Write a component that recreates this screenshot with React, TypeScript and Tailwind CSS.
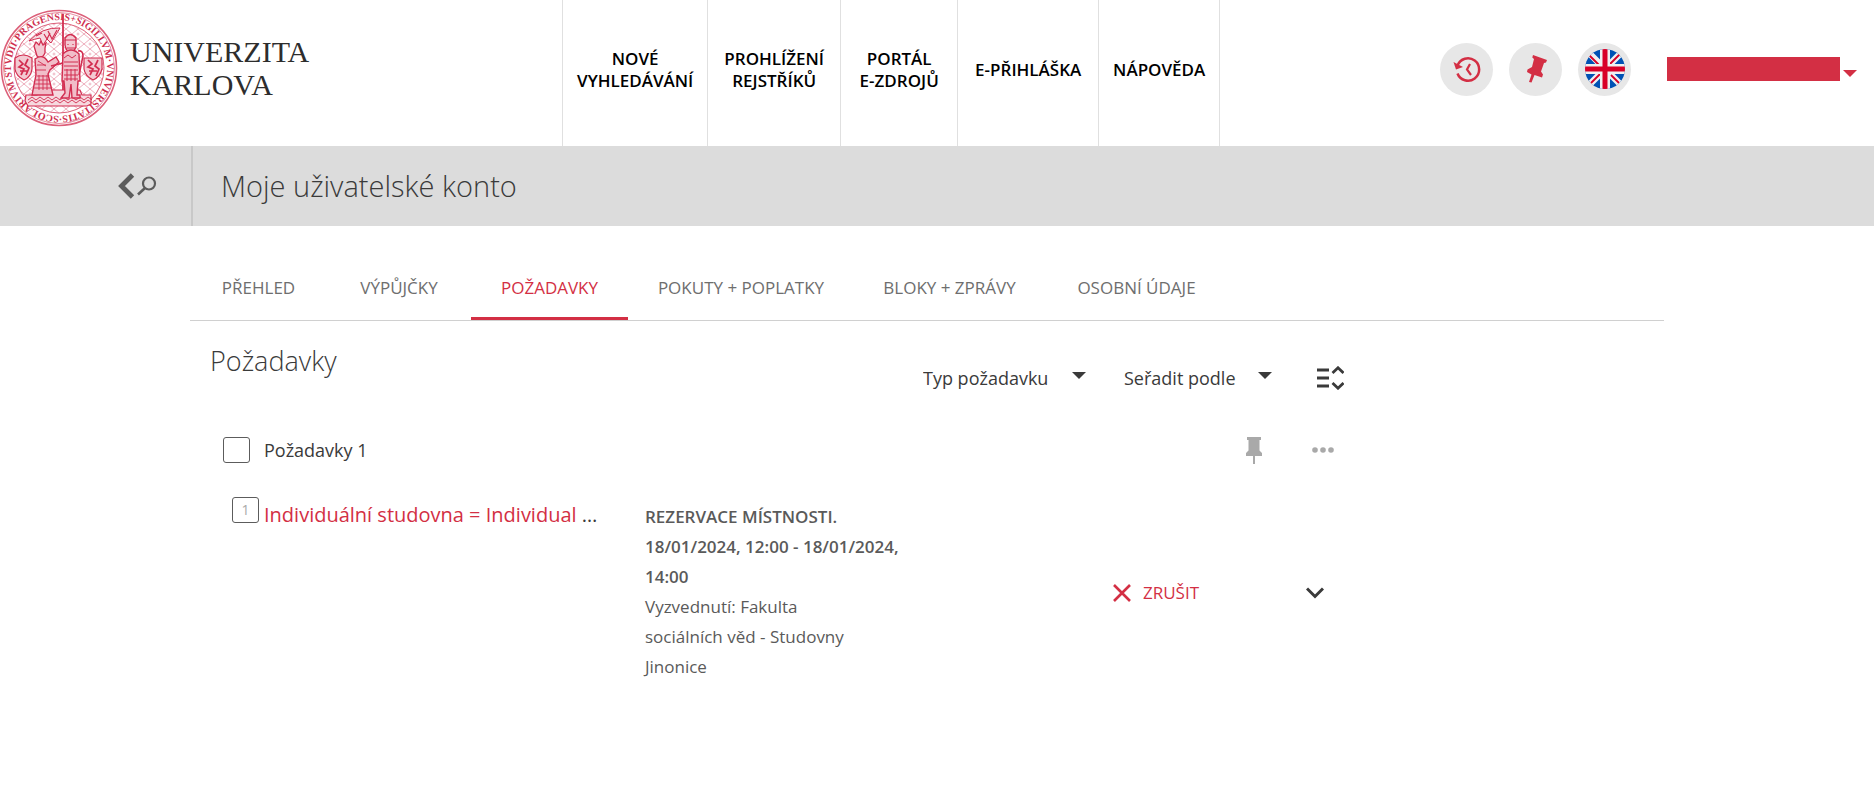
import type { ReactNode } from 'react';

const navItems = [
  { lines: ['NOVÉ', 'VYHLEDÁVÁNÍ'], width: 'w-[145px]' },
  { lines: ['PROHLÍŽENÍ', 'REJSTŘÍKŮ'], width: 'w-[133px]' },
  { lines: ['PORTÁL', 'E-ZDROJŮ'], width: 'w-[117px]' },
  { lines: ['E-PŘIHLÁŠKA'], width: 'w-[141px]' },
  { lines: ['NÁPOVĚDA'], width: 'w-[121px]' },
];

const tabs = [
  { label: 'PŘEHLED', width: 'w-[137px]' },
  { label: 'VÝPŮJČKY', width: 'w-36' },
  { label: 'POŽADAVKY', width: 'w-[157px]' },
  { label: 'POKUTY + POPLATKY', width: 'w-[226px]' },
  { label: 'BLOKY + ZPRÁVY', width: 'w-[191px]' },
  { label: 'OSOBNÍ ÚDAJE', width: 'w-[183px]' },
];

function Seal() {
  return (
    <svg viewBox="0 0 118 118" className="size-[118px] shrink-0" fill="none" stroke="#d22d50" aria-hidden="true">
      <defs>
        <pattern id="lattice" width="12" height="10" patternUnits="userSpaceOnUse">
          <path d="M0 5L6 0L12 5L6 10Z" stroke="#e58da0" strokeWidth="0.7" />
          <circle cx="6" cy="5" r="1" stroke="#e58da0" strokeWidth="0.6" />
        </pattern>
        <path id="ring" d="M59 107A48 48 0 1 1 59.1 107" />
      </defs>
      <circle cx="59" cy="59" r="57.5" strokeWidth="1.6" stroke="#dc5f79" />
      <circle cx="59" cy="59" r="55.5" strokeWidth="0.7" stroke="#dc5f79" />
      <circle cx="59" cy="59" r="45" fill="url(#lattice)" strokeWidth="1" stroke="#dc5f79" />
      <text fill="#cf2f50" stroke="none" fontSize="10" fontWeight="700" fontFamily="Liberation Serif, serif">
        <textPath href="#ring">SCOLARIVM·STVDII·PRAGENSIS+SIGILLVM·VNIVERSITATIS·</textPath>
      </text>
      <path d="M63 5V86" strokeWidth="1.8" />
      <path d="M26 86H37L39 81H80L82 86H91V95L87 97H28L25 92Z" fill="#f6d9df" strokeWidth="1.2" />
      <path d="M28 91l4-3 4 3 4-3 4 3 4-3 4 3 4-3 4 3 4-3 4 3 4-3 4 3 4-3 4 3 4-3 4 3M28 94l4-3 4 3 4-3 4 3 4-3 4 3 4-3 4 3 4-3 4 3 4-3 4 3 4-3 4 3 4-3 4 3" strokeWidth="0.9" />
      <path d="M15 49Q23 43 32 49V60Q31 68 24 71Q16 67 15 60Z" fill="#f3c9d2" strokeWidth="1.2" />
      <path d="M19 51l4 4-4 3 5 2-3 6M28 50l-3 6 4 3-3 7M20 62h8" strokeWidth="1.7" />
      <path d="M84 49H102V60Q100 68 93 71Q85 67 84 60Z" fill="#f3c9d2" strokeWidth="1.2" />
      <path d="M88 51l4 4-4 3 5 2-3 6M98 51l-3 6 4 3-3 7M89 62h8" strokeWidth="1.7" />
      <path d="M34 37l2-4 3 3 2-4 2 4 3-2-1 5v5q-3 7-8 3z" fill="#f3c9d2" strokeWidth="1.3" />
      <path d="M35 50Q43 44 48 53L56 48 59 53 50 61 48 65 53 86H32L36 66Z" fill="#f1bdc8" strokeWidth="1.4" />
      <path d="M37 56h9M36 61h10M37 67h12M36 71h14M35 75h15M34 79h17M39 66v15M43 66v15M47 66v15M38 52l8 5" strokeWidth="0.9" />
      <path d="M65 29Q70 22 76 29V38Q74 43 70 43Q66 42 65 36Z" fill="#f3c9d2" strokeWidth="1.4" />
      <path d="M65 31h11M68 35v1M73 35v1M67 39h8" strokeWidth="1.2" />
      <path d="M63 45Q71 37 79 45L80 72H78L77 86H80V89H72L71 75 69 89H61L65 84 64 72H62Z" fill="#f1bdc8" strokeWidth="1.4" />
      <path d="M64 49l4-3 4 3 4-3M64 53h14M64 57h14M64 61h14M64 66h14M64 70h14M67 60v12M71 60v12M75 60v12" strokeWidth="1" />
      <path d="M78 42q5-1 5 5l-4 19M51 57l12-3" strokeWidth="1.6" />
      <path d="M29 32Q42 18 60 19Q54 29 51 34L47 30 43 36 40 29Q35 30 29 32Z" fill="#f6d9df" strokeWidth="1" />
      <path d="M44 25l3 5 3-6M48 22l4 8 5-9M36 27l6-3" strokeWidth="1.2" />
    </svg>
  );
}

function HistoryIcon() {
  return (
    <svg viewBox="0 0 28 28" className="size-7" fill="none" stroke="#d32f44" strokeWidth="2.5" aria-hidden="true">
      <path d="M4.500 10.500A11.200 11.200 0 1 1 4.500 18.500" />
      <path d="M0.500 7L3 14.500L10 12Z" fill="#d32f44" stroke="none" />
      <path d="M17 9L14 14.500L18 20" strokeWidth="2.200" />
    </svg>
  );
}

function PinShape({ className }: { className: string }) {
  return (
    <svg viewBox="0 0 16 27" className={className} fill="currentColor" aria-hidden="true">
      <path d="M1 0H15V3H13.500V13.500L16 16V19H9V27H7V19H0V16L2.500 13.500V3H1Z" />
    </svg>
  );
}

function TiltedPin() {
  return (
    <svg viewBox="0 0 28 30" className="h-[30px] w-7" fill="#d32f44" aria-hidden="true">
      <path d="M11 1L25 6L24 8.500L22 9L19 17.500L21 20.500L20 23.500L12.500 21L9.500 28.500L7 28L9.500 20.500L5 18L5.500 15.500L10 13L12 5L10.300 3.500Z" />
    </svg>
  );
}

function UkFlag() {
  return (
    <svg viewBox="0 0 40 40" className="size-10" aria-hidden="true">
      <defs>
        <clipPath id="disc">
          <circle cx="20" cy="20" r="20" />
        </clipPath>
      </defs>
      <g clipPath="url(#disc)">
        <rect width="40" height="40" fill="#0052b4" />
        <path d="M3 3L37 37M37 3L3 37" stroke="#f0f0f0" strokeWidth="6.500" />
        <path d="M4.500 6.500L14 16M26 26L34 34M35 5L25 15M15 25L6 34" stroke="#d80027" strokeWidth="1.800" />
        <path d="M20 0V40M0 20H40" stroke="#f0f0f0" strokeWidth="10" />
        <path d="M20 0V40M0 20H40" stroke="#d80027" strokeWidth="5" />
      </g>
    </svg>
  );
}

function Caret({ className }: { className: string }) {
  return (
    <svg viewBox="0 0 14 7" className={className} fill="currentColor" aria-hidden="true">
      <path d="M0 0H14L7 7Z" />
    </svg>
  );
}

function RoundButton({ label, children }: { label: string; children: ReactNode }) {
  return (
    <button type="button" aria-label={label} className="flex size-[53px] items-center justify-center rounded-full bg-[#e7e7e7]">
      {children}
    </button>
  );
}

function Dropdown({ label, width }: { label: string; width: string }) {
  return (
    <div className={`grid items-center ${width}`}>
      <select aria-label={label} className="col-start-1 row-start-1 h-10 appearance-none bg-transparent text-[18px] leading-10">
        <option>{label}</option>
      </select>
      <Caret className="pointer-events-none col-start-1 row-start-1 mb-1.5 h-[7px] w-3.5 justify-self-end" />
    </div>
  );
}

export default function App() {
  return (
    <div className="min-h-screen bg-white font-['Open_Sans','Noto_Sans',sans-serif] text-[#3a3a3a]">
      <header className="flex h-[146px]">
        <a href="#" className="flex w-[30%] shrink-0 items-start gap-3 pt-[9px]">
          <Seal />
          <span className="pt-[26px] font-['Liberation_Serif',serif] text-[30px] leading-[33px] text-[#2d2d2d]">
            UNIVERZITA
            <br />
            KARLOVA
          </span>
        </a>
        <nav className="flex border-l border-[#e0e0e0]">
          {navItems.map(({ lines, width }) => (
            <a
              key={lines[0]}
              href="#"
              className={`flex flex-col justify-center border-r border-[#e0e0e0] pb-1.5 text-center text-[17px] leading-[22px] font-semibold text-black ${width}`}
            >
              {lines.map((line) => (
                <span key={line}>{line}</span>
              ))}
            </a>
          ))}
        </nav>
        <div className="ml-auto flex items-center gap-4 pr-[17px] pb-2">
          <RoundButton label="Historie hledání">
            <HistoryIcon />
          </RoundButton>
          <RoundButton label="Moje oblíbené">
            <TiltedPin />
          </RoundButton>
          <RoundButton label="English">
            <UkFlag />
          </RoundButton>
          <button type="button" aria-label="Uživatel" className="ml-5 flex items-center gap-[3px] text-[#d32f44]">
            <span className="h-6 w-[173px] bg-[#d32f44]" />
            <Caret className="mt-2 h-[7px] w-3.5" />
          </button>
        </div>
      </header>

      <div className="flex h-20 items-center bg-[#dcdcdc]">
        <div className="flex h-full w-[193px] items-center justify-end border-r-2 border-[#c8c8c8] pr-[34px]">
          <button type="button" aria-label="Zpět na hledání" className="text-[#5c5c5c]">
            <svg viewBox="0 0 39 26" className="h-[26px] w-[39px]" fill="none" stroke="currentColor" aria-hidden="true">
              <path d="M14.500 2L3.500 13L14.500 24" strokeWidth="4.800" />
              <circle cx="31" cy="10.500" r="6" strokeWidth="2.200" />
              <path d="M27 15L20 21.500" strokeWidth="2.600" />
            </svg>
          </button>
        </div>
        <h1 className="pl-7 text-[29px] leading-10 font-light">Moje uživatelské konto</h1>
      </div>

      <main className="pr-[210px] pl-[190px]">
        <div role="tablist" className="mt-[30px] flex border-b border-[#d0d0d0]">
          {tabs.map(({ label, width }) => {
            const active = label === 'POŽADAVKY';
            return (
              <button
                key={label}
                type="button"
                role="tab"
                aria-selected={active}
                className={`h-16 border-b-[3px] pt-0.5 text-[17px] leading-6 whitespace-nowrap ${width} ${
                  active ? 'border-[#d32f44] text-[#d32f44]' : 'border-transparent text-[#6e6e6e]'
                }`}
              >
                {label}
              </button>
            );
          })}
        </div>

        <section className="max-w-[1154px] pl-5">
          <div className="flex justify-between">
            <h2 className="pt-5 text-[27px] leading-10 font-light">Požadavky</h2>
            <div className="flex items-center pt-[37px]">
              <Dropdown label="Typ požadavku" width="w-[163px]" />
              <div className="w-[38px]" />
              <Dropdown label="Seřadit podle" width="w-[148px]" />
              <button type="button" aria-label="Rozbalit vše" className="ml-[45px]">
                <svg viewBox="0 0 27 24" className="h-6 w-[27px]" fill="none" stroke="currentColor" strokeWidth="2.800" aria-hidden="true">
                  <path d="M0 4H12M0 12H12M0 20H12" />
                  <path d="M15.500 7L21 1.800L26.500 7M15.500 17L21 22.200L26.500 17" />
                </svg>
              </button>
            </div>
          </div>

          <div className="mt-[34px] flex items-center justify-between pr-2.5">
            <div className="flex items-center gap-3.5 pl-[13px]">
              <input id="all" type="checkbox" className="h-[26px] w-[27px] appearance-none rounded-[3px] border border-[#5c5c5c]" />
              <label htmlFor="all" className="text-[18px] leading-9">
                Požadavky 1
              </label>
            </div>
            <div className="flex items-center gap-[50px] text-[#a9a9a9]">
              <button type="button" aria-label="Připnout">
                <PinShape className="h-[27px] w-4" />
              </button>
              <button type="button" aria-label="Další akce">
                <svg viewBox="0 0 22 6" className="h-1.5 w-[22px]" fill="currentColor" aria-hidden="true">
                  <circle cx="3" cy="3" r="2.800" />
                  <circle cx="11" cy="3" r="2.800" />
                  <circle cx="19" cy="3" r="2.800" />
                </svg>
              </button>
            </div>
          </div>

          <div className="mt-[25px] flex items-start text-[#5a5a5a]">
            <div className="flex w-[435px] shrink-0 items-start gap-[5px] pt-1 pl-[22px]">
              <span className="flex h-[26px] w-[27px] shrink-0 items-center justify-center rounded-[3px] border border-[#5c5c5c] text-[14px] leading-6 text-[#a9a9a9]">
                1
              </span>
              <h3 className="text-[20px] leading-9 whitespace-nowrap text-[#3a3a3a]">
                <a href="#" className="text-[#d32f44]">
                  Individuální studovna = Individual
                </a>{' '}
                …
              </h3>
            </div>
            <div className="w-[262px] pt-[9px] text-[17px] leading-[30px]">
              <p className="font-semibold">REZERVACE MÍSTNOSTI.</p>
              <p className="font-semibold">18/01/2024, 12:00 - 18/01/2024, 14:00</p>
              <p className="max-w-[215px]">Vyzvednutí: Fakulta sociálních věd - Studovny Jinonice</p>
            </div>
            <div className="ml-auto flex items-center gap-[107px] self-center pt-2.5 pr-5">
              <button type="button" className="flex items-center gap-3 text-[17px] leading-6 text-[#d32f44]">
                <svg viewBox="0 0 18 18" className="size-[18px]" stroke="currentColor" strokeWidth="2.600" aria-hidden="true">
                  <path d="M1 1L17 17M17 1L1 17" />
                </svg>
                ZRUŠIT
              </button>
              <button type="button" aria-label="Rozbalit" className="text-[#3a3a3a]">
                <svg viewBox="0 0 18 12" className="h-3 w-[18px]" fill="none" stroke="currentColor" strokeWidth="3" aria-hidden="true">
                  <path d="M1 1.500L9 9.500L17 1.500" />
                </svg>
              </button>
            </div>
          </div>
        </section>
      </main>
    </div>
  );
}
